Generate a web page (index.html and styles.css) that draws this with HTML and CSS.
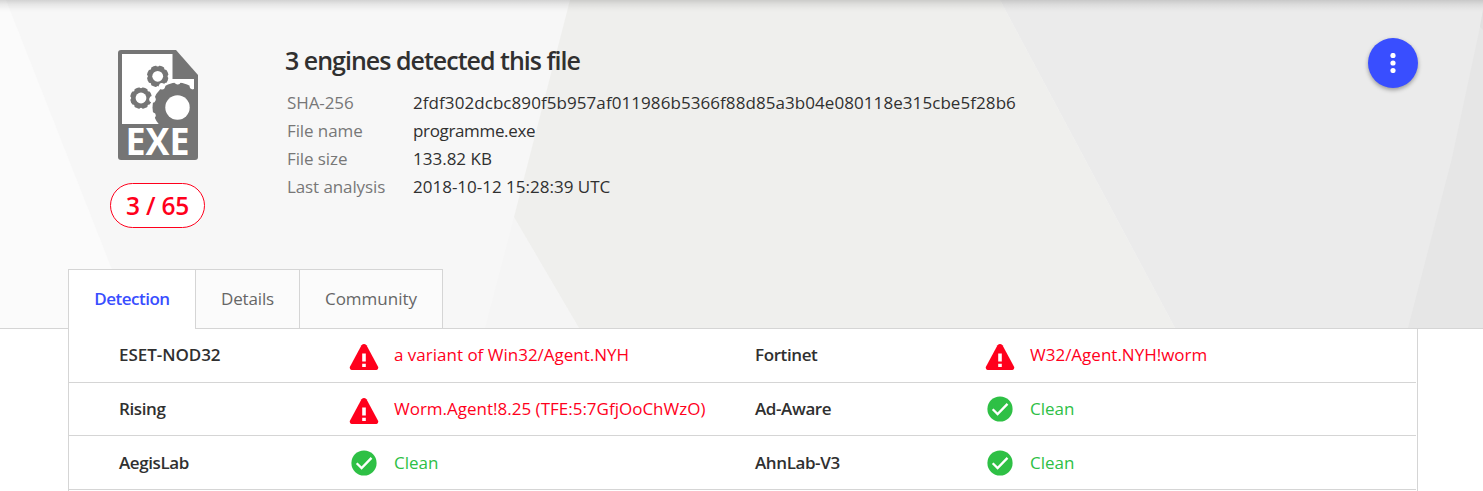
FILE: index.html
```html
<!DOCTYPE html>
<html lang="en">
<head>
<meta charset="utf-8">
<title>File report</title>
<link rel="stylesheet" href="styles.css">
</head>
<body>
<svg class="defs" aria-hidden="true">
  <symbol id="alert" viewBox="0 0 30 28">
    <path fill="#ff001c" d="M12.500 2.200Q15 -.4 17.500 2.200L29.200 24Q29.600 26.700 27.500 27H2.500Q.4 26.700 .8 24Z"/>
    <path fill="#fff" d="M13.200 10.500h3.600v8h-3.600zM13.200 20.800h3.600v3.200h-3.600z"/>
  </symbol>
  <symbol id="check" viewBox="0 0 26 26">
    <circle cx="13" cy="13" r="12.600" fill="#2ec045"/>
    <path d="M5.700 13.200L10.600 18L20.500 7.900" fill="none" stroke="#fff" stroke-width="2.300"/>
  </symbol>
</svg>
<header class="header">
  <svg class="backdrop" viewBox="0 0 1483 328" preserveAspectRatio="none" aria-hidden="true">
    <path fill="#f7f7f7" d="M0 0H1483V328H0z"/>
    <path fill="#fbfbfb" d="M0 0H6L135 328H0z"/>
    <path fill="#f5f5f5" d="M514 217L579 328H485z"/>
    <path fill="#efefed" d="M570 0H1000L1175 328H579L514 217z"/>
    <path fill="#ebebeb" d="M1000 0H1483V328H1175z"/>
    <path fill="#e6e6e6" d="M1483 10L1480 27L1451.500 160L1408 328H1483z"/>
    <path fill="#e0e0e0" d="M1483 10L1480 27L1483 30z"/>
  </svg>
  <div class="summary">
    <div class="badge">
      <svg class="file" width="80" height="110" viewBox="0 0 80 110">
        <defs>
          <clipPath id="paper"><path d="M4 4H54.500V29H76V39.500L74 41V74H4z"/></clipPath>
        </defs>
        <path fill="#757575" d="M3 0H58L80 25V107Q80 110 77 110H3Q0 110 0 107V3Q0 0 3 0z"/>
        <path fill="#fff" d="M4 4H54.500V29H76V39.500L74 41V74H4z"/>
        <g fill="#757575">
          <circle cx="39.700" cy="26.300" r="10.800"/>
          <circle cx="23" cy="48" r="10.800"/>
        </g>
        <g fill="#fff">
          <circle cx="39.700" cy="26.300" r="5.400"/>
          <circle cx="23" cy="48" r="5.400"/>
        </g>
        <g fill="none" stroke="#fff" stroke-width="3.200" stroke-linecap="round" stroke-dasharray="0 1">
          <circle cx="39.700" cy="26.300" r="11.400" pathLength="8"/>
          <circle cx="23" cy="48" r="11.400" pathLength="8"/>
        </g>
        <g clip-path="url(#paper)">
          <circle cx="59.500" cy="57.500" r="25" fill="#757575"/>
          <circle cx="59.500" cy="57.500" r="26.300" pathLength="10" fill="none" stroke="#fff" stroke-width="6.500" stroke-linecap="round" stroke-dasharray="0 1" transform="rotate(18 59.500 57.500)"/>
        </g>
        <path fill="#757575" d="M72 41L76 39V75H72zM44 74H76V76H44z"/>
        <circle cx="59.500" cy="57.500" r="12.200" fill="#fff"/>
        <text class="ext" x="7.500" y="104.500" textLength="64" lengthAdjust="spacingAndGlyphs">EXE</text>
      </svg>
      <div class="ratio">3 / 65</div>
    </div>
    <div class="info">
      <h1 class="title">3 engines detected this file</h1>
      <dl class="facts">
        <dt>SHA-256</dt><dd class="v-sha">2fdf302dcbc890f5b957af011986b5366f88d85a3b04e080118e315cbe5f28b6</dd>
        <dt>File name</dt><dd class="v-name">programme.exe</dd>
        <dt>File size</dt><dd>133.82 KB</dd>
        <dt>Last analysis</dt><dd>2018-10-12 15:28:39 UTC</dd>
      </dl>
    </div>
    <button class="menu" aria-label="More"><svg width="6" height="20" viewBox="0 0 6 20" fill="#fff"><circle cx="3" cy="2.500" r="2.600"/><circle cx="3" cy="10" r="2.600"/><circle cx="3" cy="17.500" r="2.600"/></svg></button>
  </div>
  <nav class="tabs">
    <a class="tab active">Detection</a>
    <a class="tab details">Details</a>
    <a class="tab community">Community</a>
  </nav>
</header>
<main class="results">
  <div class="row first">
    <b class="name wide">ESET-NOD32</b><svg class="icon bad-icon"><use href="#alert"/></svg><span class="bad">a variant of Win32/Agent.NYH</span>
    <b class="name">Fortinet</b><svg class="icon bad-icon"><use href="#alert"/></svg><span class="bad">W32/Agent.NYH!worm</span>
  </div>
  <div class="row short">
    <b class="name">Rising</b><svg class="icon bad-icon"><use href="#alert"/></svg><span class="bad">Worm.Agent!8.25 (TFE:5:7GfjOoChWzO)</span>
    <b class="name">Ad-Aware</b><svg class="icon"><use href="#check"/></svg><span class="good">Clean</span>
  </div>
  <div class="row">
    <b class="name">AegisLab</b><svg class="icon"><use href="#check"/></svg><span class="good">Clean</span>
    <b class="name">AhnLab-V3</b><svg class="icon"><use href="#check"/></svg><span class="good">Clean</span>
  </div>
</main>
</body>
</html>
```
FILE: styles.css
```css
* { box-sizing: border-box; }
body {
  margin: 0;
  height: 491px;
  overflow: hidden;
  background: #fff;
  color: #303030;
  font: 17px/28px "Open Sans", "Noto Sans", sans-serif;
}
.defs { display: none; }
.header {
  position: relative;
  height: 329px;
  padding: 38px 65px 0 68px;
  border-bottom: 1px solid #d5d5d5;
  display: flex;
  flex-direction: column;
  justify-content: space-between;
}
.header::after {
  content: "";
  position: absolute;
  inset: 0 0 auto;
  height: 12px;
  background: linear-gradient(rgba(0,0,0,.15), rgba(0,0,0,.07) 35%, rgba(0,0,0,.02) 75%, transparent);
}
.backdrop { position: absolute; inset: 0; width: 100%; height: 100%; z-index: -1; }
.summary { display: flex; align-items: flex-start; }
.badge {
  width: 217px;
  padding: 12px 0 0 42px;
  display: flex;
  flex-direction: column;
  gap: 23px;
}
.file { display: block; margin-left: 8px; overflow: visible; }
.ext { font: 700 37.500px "Open Sans", sans-serif; fill: #fff; }
.ratio {
  width: 95px;
  height: 45px;
  border: 1px solid #ff001c;
  border-radius: 23px;
  background: #fff;
  color: #ff001c;
  font-size: 24.500px;
  font-weight: 600;
  line-height: 43px;
  text-align: center;
  letter-spacing: -.2px;
}
.info { flex: 1; }
.title { margin: 6px 0 13px; font-size: 25px; line-height: 32px; font-weight: 600; letter-spacing: -.99px; white-space: nowrap; }
.facts {
  margin: 0 0 0 2px;
  display: grid;
  grid-template-columns: 126px max-content;
  grid-auto-rows: 28px;
}
.facts dt { color: #777; letter-spacing: -.1px; }
.facts dd { margin: 0; }
.v-sha { letter-spacing: .07px; }
.v-name { letter-spacing: -.35px; }
.menu {
  width: 50px;
  height: 50px;
  padding: 0;
  border: 0;
  border-radius: 50%;
  background: #394eff;
  box-shadow: 0 2px 4px rgba(0,0,0,.35);
  display: flex;
  align-items: center;
  justify-content: center;
}
.tabs { display: flex; width: 375px; height: 60px; margin-bottom: -1px; border: 1px solid #d5d5d5; border-width: 1px 1px 0; }
.tab {
  width: 104px;
  border-bottom: 1px solid #d5d5d5;
  background: #fbfbfb;
  color: #666;
  line-height: 58px;
  text-align: center;
}
.tab + .tab { border-left: 1px solid #d5d5d5; }
.active { width: 126px; background: #fff; border-color: #fff; color: #394eff; font-weight: 600; letter-spacing: -.5px; }
.details { letter-spacing: -.15px; }
.community { width: 143px; }
.results { width: 1350px; height: 162px; margin-left: 68px; border: 1px solid #d5d5d5; border-width: 0 1px; padding-right: 1px; }
.row {
  height: 54px;
  padding-left: 50px;
  border-bottom: 1px solid #d5d5d5;
  display: grid;
  grid-template-columns: 230px 45px 361px 230px 45px 1fr;
  align-items: center;
  white-space: nowrap;
}
.short { height: 53px; }
.first { padding-bottom: 2px; }
.name { font-weight: 600; letter-spacing: -.4px; }
.wide { letter-spacing: -.05px; }
.icon { width: 26px; height: 26px; margin-left: 2px; }
.bad-icon { width: 30px; height: 28px; margin: 4px 0 0; }
.bad { color: #ff001c; }
.good { color: #2ec045; }
```
